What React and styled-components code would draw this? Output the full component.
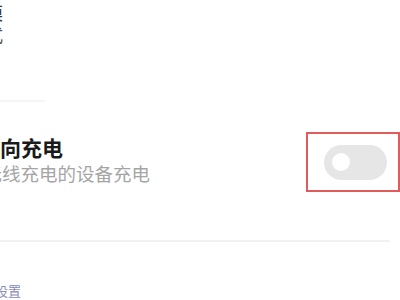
import styled, { createGlobalStyle } from "styled-components";

const GlobalStyle = createGlobalStyle`
  html, body {
    margin: 0;
    padding: 0;
    background: #fff;
    overflow: hidden;
  }
  body {
    font-family: "Noto Sans CJK SC", "Noto Sans", sans-serif;
  }
`;

const Page = styled.div`
  width: 400px;
  height: 300px;
  overflow: hidden;
  display: flex;
  flex-direction: column;
`;

const Header = styled.div`
  height: 46px;
  display: flex;
  flex-direction: column;
  overflow: hidden;
`;

const Clipped = styled.div`
  font-size: ${(p) => p.size}px;
  line-height: ${(p) => p.lh}px;
  color: ${(p) => p.color};
  font-weight: ${(p) => (p.bold ? 700 : 400)};
  margin-left: ${(p) => p.shift}px;
  white-space: nowrap;
`;

const Faint = styled.div`
  width: 45px;
  height: 2px;
  background: #f6f6f6;
  margin-top: 54px;
`;

const Row = styled.div`
  margin-top: 30px;
  height: 60px;
  display: flex;
  justify-content: space-between;
  align-items: center;
`;

const TextBlock = styled.div`
  display: flex;
  flex-direction: column;
  overflow: hidden;
  margin-top: -4px;
`;

const Highlight = styled.div`
  width: 86px;
  height: 56px;
  border: 2px solid #e25a5a;
  display: flex;
  align-items: center;
  justify-content: center;
  padding-left: 4px;
  box-sizing: content-box;
`;

const Track = styled.div`
  width: 63px;
  height: 35px;
  border-radius: 18px;
  background: #e6e6e6;
  display: flex;
  align-items: center;
  padding-left: 8px;
  box-sizing: border-box;
`;

const Knob = styled.div`
  width: 18px;
  height: 18px;
  border-radius: 50%;
  background: #fff;
`;

const Divider = styled.div`
  width: 390px;
  height: 2px;
  background: #f1f1f1;
  margin-top: 48px;
`;

const Footer = styled.div`
  margin-top: 40px;
`;

export default function App() {
  return (
    <Page>
      <GlobalStyle />
      <Header>
        <Clipped size={18} lh={24} color="#333" shift={-15}>
          模
        </Clipped>
        <Clipped size={18} lh={20} color="#555" shift={-15}>
          式
        </Clipped>
      </Header>
      <Faint />
      <Row>
        <TextBlock>
          <Clipped size={21} lh={26} color="#1a1a1a" bold shift={-21}>
            反向充电
          </Clipped>
          <Clipped size={18.5} lh={26} color="#a5a5a5" shift={-72}>
            为支持无线充电的设备充电
          </Clipped>
        </TextBlock>
        <Highlight>
          <Track>
            <Knob />
          </Track>
        </Highlight>
      </Row>
      <Divider />
      <Footer>
        <Clipped size={13} lh={18} color="#8a8db8" shift={-5}>
          设置
        </Clipped>
      </Footer>
    </Page>
  );
}
